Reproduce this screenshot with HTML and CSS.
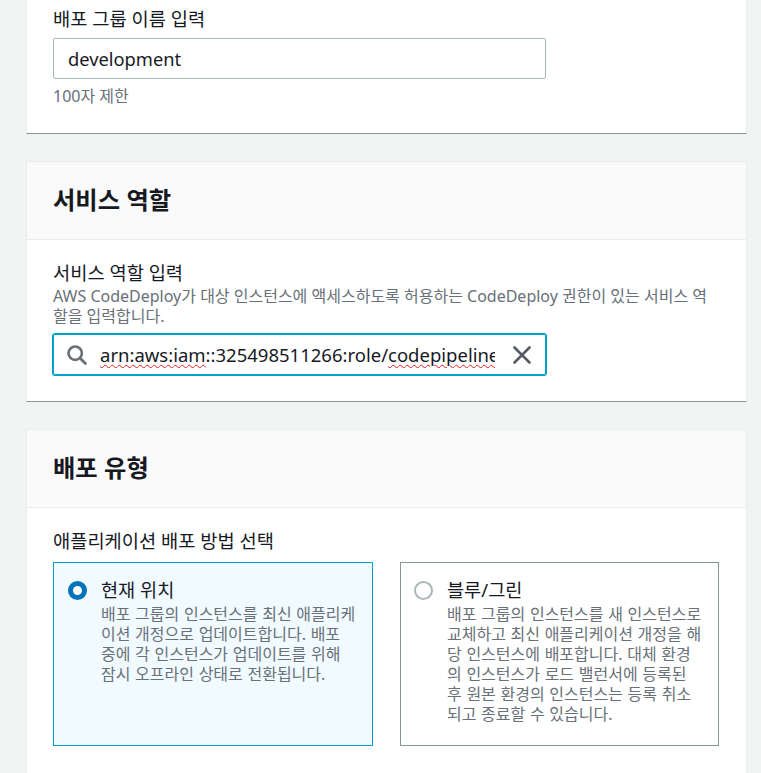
FILE: index.html
```html
<!DOCTYPE html>
<html lang="ko">
<head>
<meta charset="utf-8">
<title>배포 그룹</title>
<link rel="stylesheet" href="styles.css">
</head>
<body>
<main class="page">
  <section class="card card-first">
    <div class="card-body">
      <div class="label">배포 그룹 이름 입력</div>
      <div class="text-input">development</div>
      <div class="hint">100자 제한</div>
    </div>
  </section>

  <section class="card">
    <header class="card-header"><h2>서비스 역할</h2></header>
    <div class="card-body role-body">
      <div class="label">서비스 역할 입력</div>
      <div class="desc">AWS CodeDeploy가 대상 인스턴스에 액세스하도록 허용하는 CodeDeploy 권한이 있는 서비스 역할을 입력합니다.</div>
      <div class="search-input">
        <svg class="icon-search" viewBox="0 0 20 20" width="20" height="20" aria-hidden="true"><circle cx="8.2" cy="8.2" r="6.7" fill="none" stroke="#687078" stroke-width="2.6"/><path d="M13.2 13.2L18.4 18.4" fill="none" stroke="#687078" stroke-width="2.8" stroke-linecap="round"/></svg>
        <div class="search-text"><span class="misspelt">arn:aws:iam</span>::325498511266:role/<span class="misspelt">codepipeline</span></div>
        <svg class="icon-clear" viewBox="0 0 18 18" width="18" height="18" aria-hidden="true"><path d="M1.5 1.5L16.5 16.5M16.5 1.5L1.5 16.5" fill="none" stroke="#545b64" stroke-width="2.6" stroke-linecap="round"/></svg>
      </div>
    </div>
  </section>

  <section class="card card-last">
    <header class="card-header"><h2>배포 유형</h2></header>
    <div class="card-body type-body">
      <div class="label">애플리케이션 배포 방법 선택</div>
      <div class="options">
        <div class="option option-selected">
          <span class="radio radio-on"></span>
          <div class="option-text">
            <div class="option-title">현재 위치</div>
            <div class="option-desc">배포 그룹의 인스턴스를 최신 애플리케이션 개정으로 업데이트합니다. 배포 중에 각 인스턴스가 업데이트를 위해 잠시 오프라인 상태로 전환됩니다.</div>
          </div>
        </div>
        <div class="option">
          <span class="radio"></span>
          <div class="option-text">
            <div class="option-title">블루/그린</div>
            <div class="option-desc">배포 그룹의 인스턴스를 새 인스턴스로 교체하고 최신 애플리케이션 개정을 해당 인스턴스에 배포합니다. 대체 환경의 인스턴스가 로드 밸런서에 등록된 후 원본 환경의 인스턴스는 등록 취소되고 종료할 수 있습니다.</div>
          </div>
        </div>
      </div>
    </div>
  </section>
</main>
</body>
</html>
```

FILE: styles.css
```css
* { box-sizing: border-box; }
html, body { margin: 0; height: 100%; }
body {
  background: #f2f3f3;
  color: #16191f;
  font-family: "Noto Sans", "Noto Sans CJK KR", sans-serif;
  overflow: hidden;
}
.page {
  display: flex;
  flex-direction: column;
  gap: 27px;
  height: 773px;
  padding: 0 14px 0 26px;
  overflow: hidden;
}
.card {
  flex: none;
  background: #fff;
  border-left: 1px solid #eaeded;
  border-right: 1px solid #eaeded;
  border-top: 1px solid #eaeded;
  border-bottom: 1px solid #879596;
}
.card-first { border-top: 0; height: 134px; }
.card-last { flex: 1; border-bottom: 0; }
.card-header {
  height: 78px;
  background: #fafafa;
  border-bottom: 1px solid #eaeded;
  padding: 0 26px 2px;
  display: flex;
  align-items: center;
}
.card-header h2 {
  margin: 0;
  font-size: 24.3px;
  line-height: 32px;
  font-weight: 700;
  color: #16191f;
}
.card-body { padding: 0 26px; }
.card-first .card-body { padding-top: 7px; }
.role-body { padding-top: 21px; padding-bottom: 26px; }
.type-body { padding-top: 21px; }
.label {
  font-size: 18.7px;
  line-height: 24px;
  color: #16191f;
}
.text-input {
  width: 493px;
  height: 41px;
  margin-top: 7px;
  padding: 0 14px;
  border: 1px solid #aab7b8;
  border-radius: 2px;
  font-size: 18.3px;
  line-height: 39px;
}
.hint {
  margin-top: 6px;
  font-size: 16px;
  line-height: 22px;
  color: #687078;
}
.desc {
  margin-top: 1px;
  font-size: 16px;
  line-height: 20px;
  color: #687078;
  word-break: break-all;
}
.search-input {
  display: flex;
  align-items: center;
  width: 493px;
  height: 41px;
  margin-top: 8px;
  padding: 0 13px;
  border: 1px solid #00a1c9;
  border-radius: 2px;
  box-shadow: 0 0 0 1px #00a1c9;
}
.icon-search { flex: none; margin-right: 13px; }
.search-text {
  flex: none;
  width: 395px;
  overflow: hidden;
  white-space: nowrap;
  font-size: 18.5px;
  line-height: 38px;
}
.misspelt {
  text-decoration: underline wavy #e02020 1px;
  text-underline-offset: 2px;
}
.icon-clear { flex: none; margin-left: 18px; }
.options {
  display: grid;
  grid-template-columns: 320px 319px;
  gap: 27px;
  margin-top: 9px;
}
.option {
  display: flex;
  height: 184px;
  padding: 13px 15px 0 13px;
  border: 1px solid #879596;
}
.option-selected {
  background: #f1faff;
  border-color: #00a1c9;
  padding-left: 14px;
}
.radio {
  flex: none;
  width: 19px;
  height: 19px;
  margin: 5px 14px 0 0;
  border: 2px solid #aab7b8;
  border-radius: 50%;
  background: #fff;
}
.radio-on { border: 5px solid #0073bb; }
.option-text { min-width: 0; flex: 1; word-break: break-all; }
.option-title {
  font-size: 18.6px;
  line-height: 28px;
}
.option-desc {
  font-size: 16px;
  line-height: 20px;
  word-spacing: 0.5px;
  color: #687078;
}
```
